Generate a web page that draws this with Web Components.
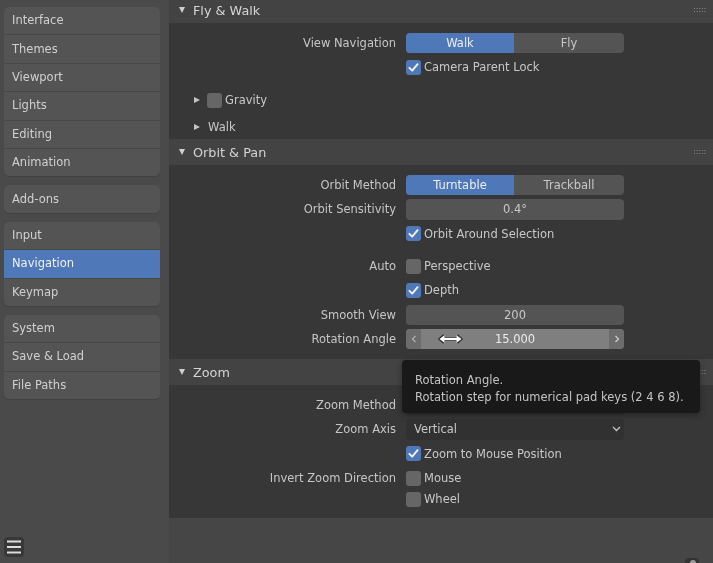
<!DOCTYPE html>
<html>
<head>
<meta charset="utf-8">
<title>Preferences</title>
<style>
  html, body { margin: 0; height: 100%; background: #494949; overflow: hidden; }
  body { font: 11.5px "DejaVu Sans", sans-serif; color: #cfcfcf; }
</style>
</head>
<body>
<prefs-window>
  <nav-sidebar slot="side">
    <nav-group>
      <nav-item>Interface</nav-item>
      <nav-item>Themes</nav-item>
      <nav-item>Viewport</nav-item>
      <nav-item>Lights</nav-item>
      <nav-item>Editing</nav-item>
      <nav-item>Animation</nav-item>
    </nav-group>
    <nav-group><nav-item>Add-ons</nav-item></nav-group>
    <nav-group>
      <nav-item>Input</nav-item>
      <nav-item active>Navigation</nav-item>
      <nav-item>Keymap</nav-item>
    </nav-group>
    <nav-group>
      <nav-item>System</nav-item>
      <nav-item>Save &amp; Load</nav-item>
      <nav-item>File Paths</nav-item>
    </nav-group>
  </nav-sidebar>

  <prefs-panel title="Fly &amp; Walk" style="margin-top:-3px;height:142px">
    <prop-row label="View Navigation"><seg-switch first="Walk" second="Fly"></seg-switch></prop-row>
    <prop-row><check-box checked>Camera Parent Lock</check-box></prop-row>
    <sub-panel style="margin-top:8.6px"><check-box>Gravity</check-box></sub-panel>
    <sub-panel style="margin-top:2.6px"><span style="margin-left:1px">Walk</span></sub-panel>
  </prefs-panel>

  <prefs-panel title="Orbit &amp; Pan" style="height:220px">
    <prop-row label="Orbit Method"><seg-switch first="Turntable" second="Trackball"></seg-switch></prop-row>
    <prop-row label="Orbit Sensitivity"><num-field>0.4°</num-field></prop-row>
    <prop-row><check-box checked>Orbit Around Selection</check-box></prop-row>
    <prop-row label="Auto" style="margin-top:8px"><check-box>Perspective</check-box></prop-row>
    <prop-row><check-box checked>Depth</check-box></prop-row>
    <prop-row label="Smooth View"><num-field>200</num-field></prop-row>
    <prop-row label="Rotation Angle"><num-field hover>15.000</num-field></prop-row>
  </prefs-panel>

  <prefs-panel title="Zoom" style="height:159px">
    <prop-row label="Zoom Method"><drop-field></drop-field></prop-row>
    <prop-row label="Zoom Axis"><drop-field>Vertical</drop-field></prop-row>
    <prop-row><check-box checked>Zoom to Mouse Position</check-box></prop-row>
    <prop-row label="Invert Zoom Direction"><check-box>Mouse</check-box></prop-row>
    <prop-row style="margin-top:-3.4px"><check-box>Wheel</check-box></prop-row>
  </prefs-panel>

  <menu-button slot="over"></menu-button>
  <hover-tip slot="over">
    <div>Rotation Angle.</div>
    <div>Rotation step for numerical pad keys (2 4 6 8).</div>
  </hover-tip>
  <resize-cursor slot="over"></resize-cursor>
  <corner-icon slot="over"></corner-icon>
</prefs-window>

<script>
// small helper, every element just sets its markup in an open shadow root
class Base extends HTMLElement {
  constructor() {
    super();
    this.attachShadow({ mode: 'open' });
    this.shadowRoot.innerHTML = this.render();
  }
  render() { return '<slot></slot>'; }
}

class PrefsWindow extends Base {
  render() {
    return `
      <style>
        :host { display: grid; grid-template-columns: 169px 1fr; width: 713px; height: 563px; overflow: hidden; position: relative; filter: blur(.5px); }
        .main { background: #464646; display: flex; flex-direction: column; height: 563px; overflow: hidden; }
      </style>
      <slot name="side"></slot>
      <div class="main"><slot></slot></div>
      <slot name="over"></slot>
    `;
  }
}

class NavSidebar extends Base {
  render() {
    return `
      <style>
        :host { display: flex; flex-direction: column; gap: 9px; padding: 7px 9px 0 4px; background: #4a4a4a; }
      </style>
      <slot></slot>
    `;
  }
}

class NavGroup extends Base {
  render() {
    return `
      <style>
        :host { display: flex; flex-direction: column; gap: 1px; border-radius: 5px; overflow: hidden; background: #484848; box-shadow: 0 1px 1px rgba(0,0,0,.12); }
      </style>
      <slot></slot>
    `;
  }
}

class NavItem extends Base {
  render() {
    return `
      <style>
        :host { display: flex; align-items: center; box-sizing: border-box; height: 27.4px; padding: 0 0 1px 8px; background: #545454; color: #d0d0d0; }
        :host([active]) { background: #4f78b8; color: #f0f0f0; }
      </style>
      <slot></slot>
    `;
  }
}

class PrefsPanel extends Base {
  render() {
    const title = this.getAttribute('title');
    return `
      <style>
        :host { display: flex; flex-direction: column; flex: none; overflow: hidden; background: #373737; }
        header { display: flex; align-items: center; height: 26px; flex: none; background: #434343; padding: 0 7px 0 10px; color: #d4d4d4; font-size: 12.8px; }
        .tri { width: 0; height: 0; border-left: 3.5px solid transparent; border-right: 3.5px solid transparent; border-top: 6px solid #cfcfcf; margin-right: 7px; }
        .name { flex: 1; margin-left: 1px; }
        .body { display: flex; flex-direction: column; gap: 3.4px; padding-top: 9.4px; }
      </style>
      <header>
        <span class="tri"></span><span class="name">${title}</span>
        <svg width="12" height="5" viewBox="0 0 12 5" fill="#8a8a8a">
          <rect x="0" y="0" width="1" height="1"/><rect x="2.6" y="0" width="1" height="1"/><rect x="5.2" y="0" width="1" height="1"/><rect x="7.8" y="0" width="1" height="1"/><rect x="10.4" y="0" width="1" height="1"/>
          <rect x="0" y="3" width="1" height="1"/><rect x="2.6" y="3" width="1" height="1"/><rect x="5.2" y="3" width="1" height="1"/><rect x="7.8" y="3" width="1" height="1"/><rect x="10.4" y="3" width="1" height="1"/>
        </svg>
      </header>
      <div class="body"><slot></slot></div>
    `;
  }
}

class PropRow extends Base {
  render() {
    const label = this.getAttribute('label') || '';
    return `
      <style>
        :host { display: grid; grid-template-columns: 227px 218px; column-gap: 10px; align-items: center; height: 21px; }
        .label { text-align: right; color: #c6c6c6; }
      </style>
      <div class="label">${label}</div>
      <div><slot></slot></div>
    `;
  }
}

class SubPanel extends Base {
  render() {
    return `
      <style>
        :host { display: flex; align-items: center; height: 21px; padding-left: 25px; color: #c6c6c6; }
        .tri { width: 0; height: 0; border-top: 3.5px solid transparent; border-bottom: 3.5px solid transparent; border-left: 6px solid #c4c4c4; margin-right: 7px; }
      </style>
      <span class="tri"></span><slot></slot>
    `;
  }
}

class SegSwitch extends Base {
  render() {
    return `
      <style>
        :host { display: grid; grid-template-columns: 108px 110px; height: 20.5px; border-radius: 4px; overflow: hidden; text-align: center; line-height: 20.5px; background: #545454; color: #c8c8c8; }
        .on { background: #4f78b8; color: #eee; }
      </style>
      <div class="on">${this.getAttribute('first')}</div>
      <div>${this.getAttribute('second')}</div>
    `;
  }
}

class CheckBox extends Base {
  render() {
    return `
      <style>
        :host { display: flex; align-items: center; gap: 3px; color: #c8c8c8; }
        .box { width: 15px; height: 15px; border-radius: 3px; background: #666; display: block; }
        :host([checked]) .box { background: #4f78b8; }
        svg { display: none; }
        :host([checked]) svg { display: block; }
      </style>
      <span class="box">
        <svg width="15" height="15" viewBox="0 0 15 15"><path d="M3.4 7.8 6.2 10.6 11.6 4.2" fill="none" stroke="#f2f2f2" stroke-width="1.9" stroke-linecap="round" stroke-linejoin="round"/></svg>
      </span>
      <slot></slot>
    `;
  }
}

class NumField extends Base {
  render() {
    return `
      <style>
        :host { display: grid; grid-template-columns: 15px 1fr 15px; height: 20.5px; line-height: 20.5px; border-radius: 4px; overflow: hidden; background: #545454; color: #c8c8c8; text-align: center; }
        :host([hover]) { background: #7f7f7f; color: #ececec; }
        .arrow { visibility: hidden; display: flex; background: #6c6c6c; align-items: center; justify-content: center; }
        :host([hover]) .arrow { visibility: visible; }
      </style>
      <span class="arrow"><svg width="6" height="8" viewBox="0 0 6 8"><path d="M4.5 1 1.5 4 4.500 7" fill="none" stroke="#b0b0b0" stroke-width="1.2"/></svg></span>
      <span><slot></slot></span>
      <span class="arrow"><svg width="6" height="8" viewBox="0 0 6 8"><path d="M1.5 1 4.5 4 1.500 7" fill="none" stroke="#cfcfcf" stroke-width="1.2"/></svg></span>
    `;
  }
}

class DropField extends Base {
  render() {
    return `
      <style>
        :host { display: flex; align-items: center; justify-content: space-between; height: 20.5px; padding: 0 3px 0 8px; border-radius: 4px; background: #313131; color: #c8c8c8; }
      </style>
      <span><slot></slot></span>
      <svg width="9" height="6" viewBox="0 0 9 6"><path d="M1 1 4.5 4.5 8 1" fill="none" stroke="#c4c4c4" stroke-width="1.3"/></svg>
    `;
  }
}

class MenuButton extends Base {
  render() {
    return `
      <style>
        :host { position: absolute; left: 4px; top: 537px; width: 20px; height: 20px; border-radius: 4px; background: #383838; display: flex; align-items: center; justify-content: center; }
      </style>
      <svg width="16" height="14" viewBox="0 0 16 14"><path d="M1 1.500H15M1 7H15M1 12.500H15" stroke="#dcdcdc" stroke-width="2"/></svg>
    `;
  }
}

class HoverTip extends Base {
  render() {
    return `
      <style>
        :host { position: absolute; left: 402px; top: 360px; box-sizing: border-box; width: 298px; height: 53px; padding: 12px 13px 0; border-radius: 4px; background: #191919; color: #c4c4c4; line-height: 17px; white-space: nowrap; box-shadow: 0 2px 6px rgba(0,0,0,.35); }
      </style>
      <slot></slot>
    `;
  }
}

class ResizeCursor extends Base {
  render() {
    return `
      <style>
        :host { position: absolute; left: 438px; top: 333px; width: 25px; height: 12px; }
      </style>
      <svg width="25" height="12" viewBox="0 0 25 12">
        <path d="M2 6H23M6 2.500 2 6 6 9.500M19 2.500 23 6 19 9.500" fill="none" stroke="#333" stroke-width="3"/>
        <path d="M1.500 6 6.500 2.200V9.800ZM23.500 6 18.500 2.200V9.800Z" fill="#fff"/>
        <path d="M5 6H20" stroke="#fff" stroke-width="2"/>
      </svg>
    `;
  }
}

class CornerIcon extends Base {
  render() {
    return `
      <style>
        :host { position: absolute; left: 685px; top: 558px; width: 14px; height: 14px; border-radius: 4px; background: #333; }
        i { display: block; width: 6px; height: 6px; margin: 2px 0 0 5px; border-radius: 3px; background: #9a9a9a; }
      </style>
      <i></i>
    `;
  }
}

customElements.define('prefs-window', PrefsWindow);
customElements.define('nav-sidebar', NavSidebar);
customElements.define('nav-group', NavGroup);
customElements.define('nav-item', NavItem);
customElements.define('prefs-panel', PrefsPanel);
customElements.define('prop-row', PropRow);
customElements.define('sub-panel', SubPanel);
customElements.define('seg-switch', SegSwitch);
customElements.define('check-box', CheckBox);
customElements.define('num-field', NumField);
customElements.define('drop-field', DropField);
customElements.define('menu-button', MenuButton);
customElements.define('hover-tip', HoverTip);
customElements.define('resize-cursor', ResizeCursor);
customElements.define('corner-icon', CornerIcon);
</script>
</body>
</html>
